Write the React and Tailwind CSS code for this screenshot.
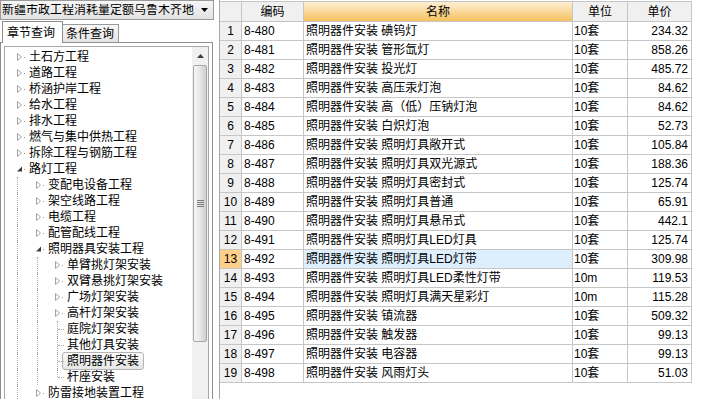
import React from 'react';

const rows = [
  ['8-480', '照明器件安装 碘钨灯', '10套', '234.32'],
  ['8-481', '照明器件安装 管形氙灯', '10套', '858.26'],
  ['8-482', '照明器件安装 投光灯', '10套', '485.72'],
  ['8-483', '照明器件安装 高压汞灯泡', '10套', '84.62'],
  ['8-484', '照明器件安装 高（低）压钠灯泡', '10套', '84.62'],
  ['8-485', '照明器件安装 白炽灯泡', '10套', '52.73'],
  ['8-486', '照明器件安装 照明灯具敞开式', '10套', '105.84'],
  ['8-487', '照明器件安装 照明灯具双光源式', '10套', '188.36'],
  ['8-488', '照明器件安装 照明灯具密封式', '10套', '125.74'],
  ['8-489', '照明器件安装 照明灯具普通', '10套', '65.91'],
  ['8-490', '照明器件安装 照明灯具悬吊式', '10套', '442.1'],
  ['8-491', '照明器件安装 照明灯具LED灯具', '10套', '125.74'],
  ['8-492', '照明器件安装 照明灯具LED灯带', '10套', '309.98'],
  ['8-493', '照明器件安装 照明灯具LED柔性灯带', '10m', '119.53'],
  ['8-494', '照明器件安装 照明灯具满天星彩灯', '10m', '115.28'],
  ['8-495', '照明器件安装 镇流器', '10套', '509.32'],
  ['8-496', '照明器件安装 触发器', '10套', '99.13'],
  ['8-497', '照明器件安装 电容器', '10套', '99.13'],
  ['8-498', '照明器件安装 风雨灯头', '10套', '51.03'],
];

// s: c = collapsed, e = expanded, l = leaf; g = guide columns drawn on this row
const tree = [
  { t: '土石方工程', l: 0, s: 'c', g: [] },
  { t: '道路工程', l: 0, s: 'c', g: [] },
  { t: '桥涵护岸工程', l: 0, s: 'c', g: [] },
  { t: '给水工程', l: 0, s: 'c', g: [] },
  { t: '排水工程', l: 0, s: 'c', g: [] },
  { t: '燃气与集中供热工程', l: 0, s: 'c', g: [] },
  { t: '拆除工程与钢筋工程', l: 0, s: 'c', g: [] },
  { t: '路灯工程', l: 0, s: 'e', g: [] },
  { t: '变配电设备工程', l: 1, s: 'c', g: [0] },
  { t: '架空线路工程', l: 1, s: 'c', g: [0] },
  { t: '电缆工程', l: 1, s: 'c', g: [0] },
  { t: '配管配线工程', l: 1, s: 'c', g: [0] },
  { t: '照明器具安装工程', l: 1, s: 'e', g: [0] },
  { t: '单臂挑灯架安装', l: 2, s: 'c', g: [0, 1] },
  { t: '双臂悬挑灯架安装', l: 2, s: 'c', g: [0, 1] },
  { t: '广场灯架安装', l: 2, s: 'c', g: [0, 1] },
  { t: '高杆灯架安装', l: 2, s: 'c', g: [0, 1] },
  { t: '庭院灯架安装', l: 2, s: 'l', g: [0, 1] },
  { t: '其他灯具安装', l: 2, s: 'l', g: [0, 1] },
  { t: '照明器件安装', l: 2, s: 'l', g: [0, 1], sel: true },
  { t: '杆座安装', l: 2, s: 'l', g: [0, 1], last: true },
  { t: '防雷接地装置工程', l: 1, s: 'c', g: [0] },
];

const guideLeft = ['left-[12px]', 'left-[32px]', 'left-[52px]'];
const indent = ['pl-[12px]', 'pl-[31px]', 'pl-[50px]'];

const Expander = ({ state }) => (
  <svg width="12" height="16" className="shrink-0">
    {state === 'c' && (
      <polygon points="0.5,4.5 4.5,8 0.5,11.5" fill="#fff" stroke="#a3a3a3" strokeWidth="1" />
    )}
    {state === 'e' && <polygon points="5,5.5 5,10.5 0,10.5" fill="#3c3c3c" />}
    {state !== 'l' && <rect x="7" y="8" width="1" height="1" fill="#9a9a9a" />}
  </svg>
);

const TreeRow = ({ item }) => (
  <div className={`relative h-[16px] flex items-center ${item.s === 'l' ? 'pl-[50px]' : indent[item.l]}`}>
    {item.g.map((g) => (
      <span key={g} className={`absolute top-0 h-[16px] border-l border-dotted border-[#a8a8a8] ${guideLeft[g]}`} />
    ))}
    {item.s === 'l' ? (
      <>
        <span className={`absolute top-0 left-[52px] border-l border-dotted border-[#a8a8a8] ${item.last ? 'h-[8px]' : 'h-[16px]'}`} />
        <span className="absolute top-[8px] left-[53px] w-[6px] border-t border-dotted border-[#a8a8a8]" />
        <span className="w-[12px] shrink-0" />
      </>
    ) : (
      <Expander state={item.s} />
    )}
    {item.sel ? (
      <span className="-ml-[5px] h-[18px] px-[4px] flex items-center border border-[#b4b4b4] rounded-[3px] bg-gradient-to-b from-[#fafafa] to-[#e6e6e6] whitespace-nowrap">
        {item.t}
      </span>
    ) : (
      <span className="whitespace-nowrap">{item.t}</span>
    )}
  </div>
);

const Scrollbar = () => (
  <div className="w-[16px] shrink-0 flex flex-col bg-[#f0f0f0]">
    <div className="h-[18px] flex items-center justify-center">
      <svg width="7" height="4">
        <polygon points="3.5,0 7,4 0,4" fill="#3c3c3c" />
      </svg>
    </div>
    <div className="h-[277px] mx-[1px] border border-[#a8a8a8] rounded-[2px] bg-gradient-to-r from-[#f6f6f6] via-[#e6e6e6] to-[#cfcfcf] flex items-center justify-center">
      <div className="flex flex-col gap-[1px]">
        <span className="w-[7px] h-[1px] bg-[#7a7a7a]" />
        <span className="w-[7px] h-[1px] bg-[#7a7a7a]" />
        <span className="w-[7px] h-[1px] bg-[#7a7a7a]" />
        <span className="w-[7px] h-[1px] bg-[#7a7a7a]" />
      </div>
    </div>
    <div className="flex-1" />
  </div>
);

const cell = 'border-r border-b border-[#c6c6c6] h-[19px] flex items-center whitespace-nowrap overflow-hidden';
const head = 'border-r border-b border-[#c6c6c6] h-[20px] flex items-center justify-center';

export default function App() {
  return (
    <div className="w-[702px] h-[399px] flex items-start bg-white text-[12px] leading-none text-black font-['Liberation_Sans','Noto_Sans_CJK_SC',sans-serif] overflow-hidden">
      {/* left: quota selector + chapter tree (continues below the window) */}
      <div className="w-[214px] flex flex-col shrink-0">
        <div className="h-[20px] border border-[#9a9a9a] bg-gradient-to-b from-[#f6f6f6] to-[#e2e2e2] flex items-center pl-[1px]">
          <span className="flex-1 whitespace-nowrap overflow-hidden">新疆市政工程消耗量定额乌鲁木齐地</span>
          <svg width="7" height="4" className="mr-[5px]">
            <polygon points="0,0 7,0 3.5,4" fill="#000" />
          </svg>
        </div>
        <div className="h-[22px] flex items-end">
          <div className="relative z-10 ml-[2px] w-[61px] h-[22px] -mb-[1px] border-t border-l border-r border-[#8e8e8e] bg-white pl-[4px] flex items-center">
            章节查询
          </div>
          <div className="w-[56px] h-[18px] border-t border-r border-[#9a9a9a] bg-gradient-to-b from-[#f8f8f8] to-[#e4e4e4] pl-[3px] flex items-center">
            条件查询
          </div>
        </div>
        <div className="w-[213px] h-[380px] border border-[#8e8e8e] bg-white p-[3px]">
          <div className="h-full border border-[#a8a8a8] flex">
            <div className="flex-1 pt-[2px] overflow-hidden">
              {tree.map((item) => (
                <TreeRow key={item.t} item={item} />
              ))}
            </div>
            <Scrollbar />
          </div>
        </div>
      </div>

      <div className="w-[5px] shrink-0" />

      {/* right: quota grid */}
      <div className="flex-1 h-full border-l border-[#a8a8a8]">
        <div className="mt-[1px] border-t border-[#c6c6c6] w-[472px]">
          <div className="grid grid-cols-[22px_62px_269px_55px_64px]">
            <div className={`${head} bg-[#f0f0f0]`} />
            <div className={`${head} bg-[#f0f0f0]`}>编码</div>
            <div className={`${head} bg-gradient-to-b from-[#fdefd2] to-[#f5c15c]`}>名称</div>
            <div className={`${head} bg-[#f0f0f0]`}>单位</div>
            <div className={`${head} bg-[#f0f0f0]`}>单价</div>
            {rows.map(([code, name, unit, price], i) => {
              const active = i === 12;
              return (
                <React.Fragment key={code}>
                  <div className={`${cell} justify-center ${active ? 'bg-[#fcd089]' : 'bg-[#f0f0f0]'}`}>{i + 1}</div>
                  <div className={`${cell} pl-[2px]`}>{code}</div>
                  <div className={`${cell} pl-[2px] ${active ? 'bg-[#ddeefc]' : ''}`}>{name}</div>
                  <div className={`${cell} pl-[1px]`}>{unit}</div>
                  <div className={`${cell} justify-end pr-[3px]`}>{price}</div>
                </React.Fragment>
              );
            })}
          </div>
        </div>
      </div>
    </div>
  );
}
